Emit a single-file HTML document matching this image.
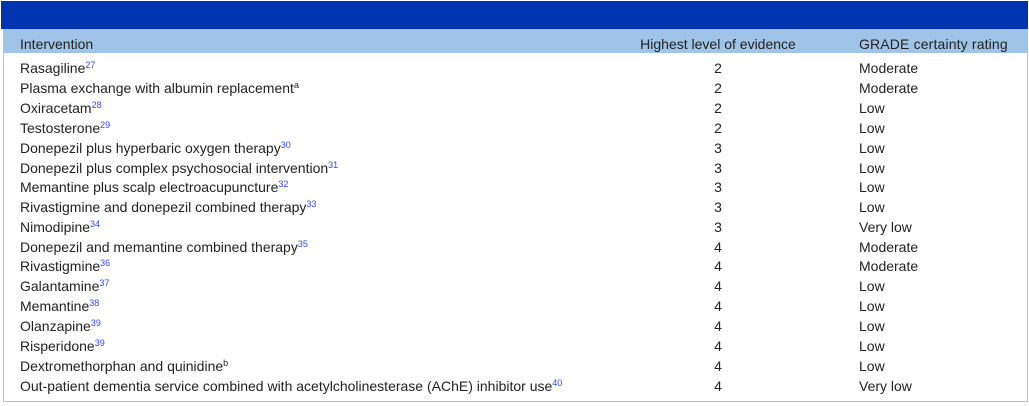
<!DOCTYPE html>
<html><head><meta charset="utf-8"><style>
body{margin:0;width:1029px;height:406px;background:#fff;font-family:"Liberation Sans",sans-serif;font-size:14px;color:#222;position:relative;overflow:hidden}
.bar{position:absolute;left:1px;top:1px;width:1027px;height:28px;background:#0033b0}
.box{position:absolute;left:3px;top:29px;width:1023px;height:372px;border:1px solid #a6c4e6;border-top:none}
.hd{position:absolute;left:4px;top:29px;width:1023px;height:24px;background:#a0c4e8}
.r{position:absolute;left:0;width:1029px;height:20px;line-height:20px;white-space:nowrap}
.a{position:absolute;left:20px}
.b{position:absolute;left:668px;width:100px;text-align:center}
.c{position:absolute;left:859px}
sup{color:#3344ee;font-size:9px;vertical-align:5px;line-height:0}
</style></head><body>
<div class="bar"></div><div class="box"></div><div class="hd"></div>
<div class="r" style="top:34px"><span class="a">Intervention</span><span class="b" style="left:618px;width:200px">Highest level of evidence</span><span class="c" style="letter-spacing:0.15px">GRADE certainty rating</span></div>
<div class="r" style="top:58px"><span class="a">Rasagiline<sup>27</sup></span><span class="b">2</span><span class="c">Moderate</span></div>
<div class="r" style="top:78px"><span class="a">Plasma exchange with albumin replacement<sup style="color:#222">a</sup></span><span class="b">2</span><span class="c">Moderate</span></div>
<div class="r" style="top:98px"><span class="a">Oxiracetam<sup>28</sup></span><span class="b">2</span><span class="c">Low</span></div>
<div class="r" style="top:118px"><span class="a">Testosterone<sup>29</sup></span><span class="b">2</span><span class="c">Low</span></div>
<div class="r" style="top:138px"><span class="a">Donepezil plus hyperbaric oxygen therapy<sup>30</sup></span><span class="b">3</span><span class="c">Low</span></div>
<div class="r" style="top:158px"><span class="a">Donepezil plus complex psychosocial intervention<sup>31</sup></span><span class="b">3</span><span class="c">Low</span></div>
<div class="r" style="top:177px"><span class="a">Memantine plus scalp electroacupuncture<sup>32</sup></span><span class="b">3</span><span class="c">Low</span></div>
<div class="r" style="top:197px"><span class="a">Rivastigmine and donepezil combined therapy<sup>33</sup></span><span class="b">3</span><span class="c">Low</span></div>
<div class="r" style="top:217px"><span class="a">Nimodipine<sup>34</sup></span><span class="b">3</span><span class="c">Very low</span></div>
<div class="r" style="top:237px"><span class="a">Donepezil and memantine combined therapy<sup>35</sup></span><span class="b">4</span><span class="c">Moderate</span></div>
<div class="r" style="top:256px"><span class="a">Rivastigmine<sup>36</sup></span><span class="b">4</span><span class="c">Moderate</span></div>
<div class="r" style="top:276px"><span class="a">Galantamine<sup>37</sup></span><span class="b">4</span><span class="c">Low</span></div>
<div class="r" style="top:296px"><span class="a">Memantine<sup>38</sup></span><span class="b">4</span><span class="c">Low</span></div>
<div class="r" style="top:316px"><span class="a">Olanzapine<sup>39</sup></span><span class="b">4</span><span class="c">Low</span></div>
<div class="r" style="top:336px"><span class="a">Risperidone<sup>39</sup></span><span class="b">4</span><span class="c">Low</span></div>
<div class="r" style="top:356px"><span class="a">Dextromethorphan and quinidine<sup style="color:#222">b</sup></span><span class="b">4</span><span class="c">Low</span></div>
<div class="r" style="top:376px"><span class="a">Out-patient dementia service combined with acetylcholinesterase (AChE) inhibitor use<sup>40</sup></span><span class="b">4</span><span class="c">Very low</span></div>
</body></html>
